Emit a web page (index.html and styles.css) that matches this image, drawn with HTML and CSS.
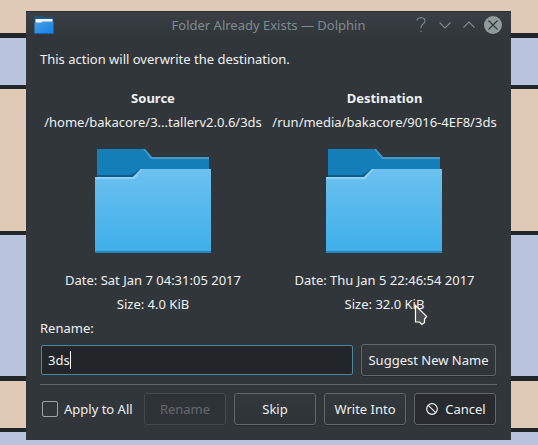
FILE: index.html
```html
<!DOCTYPE html>
<html lang="en">
<head>
  <meta charset="UTF-8" />
  <title>Folder Already Exists — Dolphin</title>
  <link rel="stylesheet" href="styles.css">
</head>
<body>
  <!-- Shared folder icon -->
  <svg class="defs" width="0" height="0">
    <defs>
      <linearGradient id="front" x1="0" y1="0" x2="0" y2="1">
        <stop offset="0" stop-color="#6cc1ef" />
        <stop offset="1" stop-color="#3daee9" />
      </linearGradient>
      <symbol id="folder" viewBox="0 0 128 128">
        <path fill="#147eb8" d="M8 12H56L63 20H120V60H8z" />
        <path fill="#439ac8" d="M56 12L63 20H120V22H62L54 12z" />
        <path fill="#0f5d8b" d="M8 38H42L52 32V42H8z" />
        <path fill="url(#front)" d="M6 40H44L52 32H122V116H6z" />
        <path fill="#8fd0f4" d="M6 40H44L52 32H54L45.500 42H6z" />
        <path fill="#2b84b5" d="M6 114H122V116H6z" />
      </symbol>
    </defs>
  </svg>

  <div class="dialog">
    <div class="titlebar">
      <svg class="app-icon" width="20" height="20" viewBox="0 0 20 20">
        <defs>
          <linearGradient id="app" x1="0" y1="0" x2="1" y2="1">
            <stop offset="0" stop-color="#4a9fe6" />
            <stop offset="1" stop-color="#1280e6" />
          </linearGradient>
        </defs>
        <path fill="#1d5680" d="M.5 1H9L10 2H19.500V8H.5z" />
        <path fill="#f4f5f6" d="M1.500 4H18.500V8H1.500z" />
        <path fill="url(#app)" d="M.5 7.500H7.500L8.500 6.500H19.500V18.500H.5z" />
        <path fill="#1565b0" d="M.5 18H19.500V19H.5z" />
      </svg>
      <span class="title">Folder Already Exists — Dolphin</span>
      <div class="controls">
        <svg width="18" height="18" viewBox="0 0 18 18"><path d="M5 4.500C5.500 1 13 .5 13 5C13 8 9 8 9 12" /><path d="M9 14.500V16" /></svg>
        <svg width="18" height="18" viewBox="0 0 18 18"><path d="M3.500 6.500L9 12L14.500 6.500" /></svg>
        <svg width="18" height="18" viewBox="0 0 18 18"><path d="M3.500 11.500L9 6L14.500 11.500" /></svg>
        <svg width="18" height="18" viewBox="0 0 18 18"><circle class="disc" cx="9" cy="9" r="9" /><path class="cross" d="M4.500 4.500L13.500 13.500M13.500 4.500L4.500 13.500" /></svg>
      </div>
    </div>

    <div class="content">
      <p class="message">This action will overwrite the destination.</p>

      <div class="files">
        <div class="file">
          <strong>Source</strong>
          <span>/home/bakacore/3...tallerv2.0.6/3ds</span>
          <svg width="128" height="128"><use href="#folder" /></svg>
          <span>Date: Sat Jan 7 04:31:05 2017</span>
          <span>Size: 4.0 KiB</span>
        </div>
        <div class="file destination">
          <strong>Destination</strong>
          <span>/run/media/bakacore/9016-4EF8/3ds</span>
          <svg width="128" height="128"><use href="#folder" /></svg>
          <span>Date: Thu Jan 5 22:46:54 2017</span>
          <span>Size: 32.0 KiB</span>
        </div>
      </div>

      <div class="rename-label">Rename:</div>
      <div class="rename-row">
        <div class="input">3ds<span class="caret"></span></div>
        <button class="btn suggest">Suggest New Name</button>
      </div>

      <div class="separator"></div>

      <div class="actions">
        <label class="apply"><span class="checkbox"></span>Apply to All</label>
        <button class="btn disabled" disabled>Rename</button>
        <button class="btn">Skip</button>
        <button class="btn">Write Into</button>
        <button class="btn cancel">
          <svg width="12" height="12" viewBox="0 0 12 12"><circle cx="6" cy="6" r="5.300" /><path d="M2.300 2.300L9.700 9.700" /></svg>
          Cancel
        </button>
      </div>
    </div>
  </div>

  <!-- Mouse pointer -->
  <svg class="pointer" width="15" height="22" viewBox="0 0 15 22">
    <path d="M1.500 1.500L12.700 12.500L10.500 15V18.500L8 20.500L5.500 18H1.500z" />
  </svg>
</body>
</html>
```
FILE: styles.css
```css
* {
  box-sizing: border-box;
}

body {
  margin: 0;
  width: 538px;
  height: 445px;
  padding: 11px 27px 5px 26px;
  overflow: hidden;
  font-family: "Noto Sans", sans-serif;
  font-size: 13px;
  line-height: 18px;
  color: #eff0f1;
  background: linear-gradient(
    #dfcab7 33px,
    #212629 33px, #212629 38px,
    #b9c5de 38px, #b9c5de 85px,
    #212629 85px, #212629 89px,
    #dfcab7 89px, #dfcab7 231px,
    #212629 231px, #212629 235px,
    #b9c5de 235px, #b9c5de 376px,
    #212629 376px, #212629 381px,
    #dfcab7 381px, #dfcab7 428px,
    #212629 428px, #212629 432px,
    #b9c5de 432px
  );
}

.defs {
  display: block;
}

.dialog {
  width: 485px;
  height: 429px;
  background: #31363b;
}

.titlebar {
  display: flex;
  align-items: center;
  height: 28px;
  padding: 0 9px 1px 8px;
  border-top: 1px solid #2b3034;
  background: linear-gradient(#3b4046, #31363b 24px);
}

.title {
  flex: 1;
  padding-left: 71px;
  text-align: center;
  white-space: nowrap;
  color: #7f8c8d;
}

.controls {
  display: flex;
  gap: 6px;
}

.controls svg {
  fill: none;
  stroke: #7f8c8d;
  stroke-width: 1.1;
}

.controls .disc {
  fill: #919b9c;
  stroke: none;
}

.controls .cross {
  stroke: #31363b;
}

.content {
  padding: 11px 14px 0;
}

.message {
  margin: 0 0 21px;
}

.files {
  display: grid;
  grid-template-columns: 226px 225px;
  column-gap: 6px;
}

.file {
  display: flex;
  flex-direction: column;
  align-items: center;
  gap: 6px;
  white-space: nowrap;
}

.destination svg {
  margin-right: 1px;
}

.rename-label {
  margin: 6px 0;
}

.rename-row {
  display: flex;
  align-items: center;
  gap: 8px;
  height: 34px;
  padding: 0 1px;
}

.input {
  display: flex;
  align-items: center;
  flex: 1;
  height: 30px;
  padding-left: 6px;
  border: 1px solid #4a86a3;
  border-radius: 2px;
  background: #232629;
}

.caret {
  width: 1px;
  height: 18px;
  background: #fff;
}

.btn {
  display: flex;
  align-items: center;
  justify-content: center;
  width: 82px;
  height: 32px;
  padding: 0;
  border: 1px solid #636769;
  border-radius: 3px;
  background: linear-gradient(#33383d, #2f3439);
  box-shadow: 0 1px 1px rgba(0, 0, 0, 0.2);
  font: inherit;
  color: inherit;
  white-space: nowrap;
}

.btn.suggest {
  width: 135px;
}

.btn.disabled {
  border-color: #45494d;
  background: #2e3338;
  box-shadow: none;
  color: #65696c;
}

.btn.cancel {
  gap: 7px;
  padding-left: 2px;
  background: #272b2f;
}

.btn.cancel svg {
  fill: none;
  stroke: #eff0f1;
  stroke-width: 1.2;
}

.separator {
  height: 1px;
  margin-top: 7px;
  background: #616568;
}

.actions {
  display: flex;
  gap: 8px;
  padding: 8px 1px 0;
}

.apply {
  display: flex;
  align-items: center;
  flex: 1;
  gap: 6px;
  padding-left: 1px;
  white-space: nowrap;
}

.checkbox {
  width: 16px;
  height: 16px;
  border: 1px solid #a1a4a6;
  border-radius: 2px;
}

.pointer {
  position: absolute;
  left: 414px;
  top: 304px;
  fill: #4d4d4d;
  stroke: #fff;
  stroke-width: 1.2;
}
```
